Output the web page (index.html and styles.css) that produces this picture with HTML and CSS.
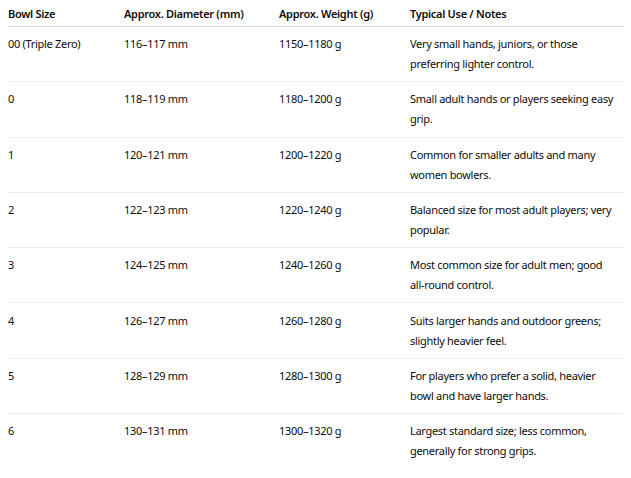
FILE: index.html
```html
<!DOCTYPE html>
<html>
<head>
<meta charset="utf-8">
<link rel="stylesheet" href="styles.css">
</head>
<body>
<table class="bowls">
  <colgroup>
    <col class="c1"><col class="c2"><col class="c3"><col class="c4">
  </colgroup>
  <thead>
    <tr><th>Bowl Size</th><th>Approx. Diameter (mm)</th><th>Approx. Weight (g)</th><th>Typical Use / Notes</th></tr>
  </thead>
  <tbody>
    <tr><td>00 (Triple Zero)</td><td>116–117 mm</td><td>1150–1180 g</td><td>Very small hands, juniors, or those preferring lighter control.</td></tr>
    <tr><td>0</td><td>118–119 mm</td><td>1180–1200 g</td><td>Small adult hands or players seeking easy grip.</td></tr>
    <tr><td>1</td><td>120–121 mm</td><td>1200–1220 g</td><td>Common for smaller adults and many women bowlers.</td></tr>
    <tr><td>2</td><td>122–123 mm</td><td>1220–1240 g</td><td>Balanced size for most adult players; very popular.</td></tr>
    <tr><td>3</td><td>124–125 mm</td><td>1240–1260 g</td><td>Most common size for adult men; good <span class="nowrap">all-round</span> control.</td></tr>
    <tr><td>4</td><td>126–127 mm</td><td>1260–1280 g</td><td>Suits larger hands and outdoor greens; slightly heavier feel.</td></tr>
    <tr><td>5</td><td>128–129 mm</td><td>1280–1300 g</td><td>For players who prefer a solid, heavier bowl and have larger hands.</td></tr>
    <tr><td>6</td><td>130–131 mm</td><td>1300–1320 g</td><td>Largest standard size; less common, generally for strong grips.</td></tr>
  </tbody>
</table>
</body>
</html>
```
FILE: styles.css
```css
html, body {
  margin: 0;
  padding: 0;
  background: #ffffff;
}
body {
  padding: 0 8px;
  font-family: "Noto Sans", "Open Sans", sans-serif;
  font-size: 11px;
  letter-spacing: -0.3px;
  color: #0d0d0d;
}
.bowls {
  width: 615px;
  border-collapse: collapse;
  table-layout: fixed;
}
.c1 { width: 116px; }
.c2 { width: 155px; }
.c3 { width: 131px; }
.c4 { width: 213px; }
.bowls th {
  text-align: left;
  font-weight: 600;
  line-height: 20px;
  padding: 4px 0 2px;
  border-bottom: 1px solid #d4d4d4;
  white-space: nowrap;
}
.bowls td {
  vertical-align: top;
  line-height: 20px;
  padding: 7.15px 8px 7.15px 0;
  border-bottom: 1px solid #ececec;
}
.bowls td:last-child {
  padding-right: 2px;
}
.bowls tbody tr:last-child td {
  border-bottom: none;
}
.nowrap {
  white-space: nowrap;
}
```
